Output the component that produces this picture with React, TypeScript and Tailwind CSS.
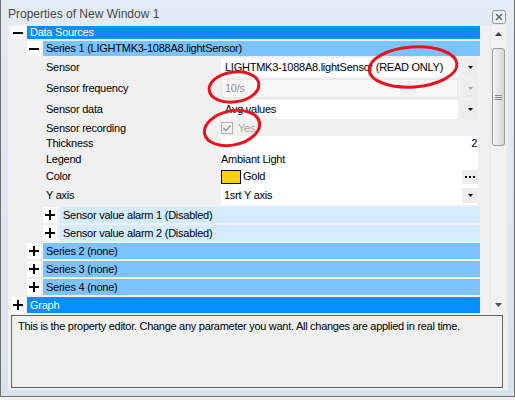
import React from "react";

const font = "font-['Liberation_Sans',Arial,sans-serif]";

function Sign({ plus }: { plus?: boolean }) {
  return (
    <div className="flex w-[14px] shrink-0 items-center justify-center bg-white">
      <svg width="10" height="10" viewBox="0 0 10 10">
        <rect x="0" y="4" width="10" height="2" fill="#000" />
        {plus && <rect x="4" y="0" width="2" height="10" fill="#000" />}
      </svg>
    </div>
  );
}

function Group({
  pad,
  open,
  label,
  band,
  className,
}: {
  pad: string;
  open?: boolean;
  label: string;
  band: string;
  className: string;
}) {
  return (
    <div className={`flex shrink-0 ${className}`}>
      <div className={`shrink-0 ${pad}`} />
      <Sign plus={!open} />
      <div className={`flex flex-1 items-center whitespace-nowrap pl-[3px] ${band}`}>{label}</div>
    </div>
  );
}

function Prop({ label, h, children }: { label: string; h: string; children?: React.ReactNode }) {
  return (
    <div className={`flex shrink-0 ${h}`}>
      <div className="w-[38px] shrink-0" />
      <div className="flex w-[175px] shrink-0 items-center whitespace-nowrap">{label}</div>
      <div className="mr-[2px] flex flex-1">{children}</div>
    </div>
  );
}

function Arrow({ color = "#000" }: { color?: string }) {
  return (
    <svg width="5" height="3" viewBox="0 0 5 3">
      <polygon points="0,0 5,0 2.5,3" fill={color} />
    </svg>
  );
}

function DropButton({ disabled }: { disabled?: boolean }) {
  return (
    <div className="ml-[4px] flex w-[16px] shrink-0 items-center justify-center bg-[#ededed]">
      <Arrow color={disabled ? "#a6a6a6" : "#000"} />
    </div>
  );
}

export default function App() {
  return (
    <div className={`relative h-[400px] w-[515px] overflow-hidden bg-[#f0f0f0] text-[11px] tracking-[-0.25px] text-black ${font}`}>
      <div className="flex h-[397px] flex-col border-x border-b border-[#707070] bg-gradient-to-b from-[#e3ebf5] to-[#d8e3f0]">
        {/* title bar */}
        <div className="flex h-[25px] shrink-0 items-start justify-between pl-[7px] pr-[8px]">
          <div className="pt-[7px] text-[12px] leading-[14px] tracking-normal text-[#474747]">
            Properties of New Window 1
          </div>
          <div className="mt-[10px]">
            <svg width="14" height="14" viewBox="0 0 14 14">
              <rect x="0.5" y="0.5" width="13" height="13" rx="2" fill="#edf1f7" stroke="#8c97a8" />
              <path d="M4 4 L10 10 M10 4 L4 10" stroke="#ffffff" strokeWidth="3.2" />
              <path d="M4 4 L10 10 M10 4 L4 10" stroke="#5e6878" strokeWidth="1.6" />
            </svg>
          </div>
        </div>

        {/* content panel */}
        <div className="mx-[7px] flex h-[365px] w-[500px] shrink-0 flex-col bg-[#f0f0f0]">
          <div className="flex h-[288px] shrink-0 overflow-hidden">
            {/* property rows */}
            <div className="flex w-[482px] flex-col overflow-hidden pr-[10px] leading-[13px]">
              <Group
                pad="w-[3px]"
                open
                label="Data Sources"
                band="ml-[2px] bg-[#0b8cff] text-white"
                className="mt-[1px] h-[13px]"
              />
              <Group
                pad="w-[19px]"
                open
                label="Series 1 (LIGHTMK3-1088A8.lightSensor)"
                band="ml-[2px] bg-[#7ac3ff]"
                className="mt-[2px] h-[15px]"
              />

              <div className="mt-[2px]">
                <Prop label="Sensor" h="h-[19px]">
                  <div className="flex flex-1 items-center whitespace-nowrap bg-white pl-[4px]">
                    LIGHTMK3-1088A8.lightSensor (READ ONLY)
                  </div>
                  <DropButton />
                </Prop>
              </div>
              <div className="mt-[2px]">
                <Prop label="Sensor frequency" h="h-[19px]">
                  <div className="flex flex-1 items-center border border-[#e6e6e6] bg-[#f8f8f8] pl-[3px] text-[#8f8f8f]">
                    10/s
                  </div>
                  <DropButton disabled />
                </Prop>
              </div>
              <div className="mt-[2px]">
                <Prop label="Sensor data" h="h-[19px]">
                  <div className="flex flex-1 items-center bg-white pl-[4px]">Avg values</div>
                  <DropButton />
                </Prop>
              </div>
              <div className="mt-[1px]">
                <Prop label="Sensor recording" h="h-[16px]">
                  <div className="flex flex-1 items-center gap-[5px] text-[#a9a9a9]">
                    <svg width="12" height="12" viewBox="0 0 12 12">
                      <rect x="0.5" y="0.5" width="11" height="11" fill="#f5f5f5" stroke="#b1b1b1" />
                      <path d="M2.5 6 L5 8.5 L9.5 3.5" fill="none" stroke="#9c9c9c" strokeWidth="1.6" />
                    </svg>
                    Yes
                  </div>
                </Prop>
              </div>
              <Prop label="Thickness" h="h-[15px]">
                <div className="flex flex-1 items-center justify-end bg-white pr-[1px]">2</div>
              </Prop>
              <Prop label="Legend" h="h-[16px]">
                <div className="flex flex-1 items-center bg-white">Ambiant Light</div>
              </Prop>
              <Prop label="Color" h="h-[19px]">
                <div className="flex flex-1 items-center bg-white">
                  <div className="h-[14px] w-[20px] shrink-0 border border-black bg-[#ffd200]" />
                  <span className="ml-[2px]">Gold</span>
                  <div className="ml-auto flex h-[14px] w-[16px] items-center justify-center bg-[#ededed]">
                    <svg width="10" height="2" viewBox="0 0 10 2">
                      <rect x="0" y="0" width="2" height="2" fill="#000" />
                      <rect x="4" y="0" width="2" height="2" fill="#000" />
                      <rect x="8" y="0" width="2" height="2" fill="#000" />
                    </svg>
                  </div>
                </div>
              </Prop>
              <Prop label="Y axis" h="h-[19px]">
                <div className="flex flex-1 bg-white py-[2px]">
                  <div className="flex flex-1 items-center pl-[3px]">1srt Y axis</div>
                  <DropButton />
                </div>
              </Prop>

              <Group
                pad="w-[35px]"
                label="Sensor value alarm 1 (Disabled)"
                band="ml-[3px] bg-[#d5ebff]"
                className="mt-[2px] h-[16px]"
              />
              <Group
                pad="w-[35px]"
                label="Sensor value alarm 2 (Disabled)"
                band="ml-[3px] bg-[#d5ebff]"
                className="mt-[2px] h-[16px]"
              />
              <Group pad="w-[19px]" label="Series 2 (none)" band="ml-[2px] bg-[#7ac3ff]" className="mt-[2px] h-[16px]" />
              <Group pad="w-[19px]" label="Series 3 (none)" band="ml-[2px] bg-[#7ac3ff]" className="mt-[2px] h-[16px]" />
              <Group pad="w-[19px]" label="Series 4 (none)" band="ml-[2px] bg-[#7ac3ff]" className="mt-[2px] h-[16px]" />
              <Group
                pad="w-[3px]"
                label="Graph"
                band="ml-[2px] bg-[#0b8cff] text-white"
                className="mt-[2px] h-[16px]"
              />
            </div>

            {/* scrollbar */}
            <div className="flex w-[17px] shrink-0 flex-col border-x border-[#e8e8e8] bg-[#f2f2f2]">
              <div className="flex h-[17px] shrink-0 items-center justify-center">
                <svg width="7" height="4" viewBox="0 0 7 4">
                  <polygon points="0,4 7,4 3.5,0" fill="#404040" />
                </svg>
              </div>
              <div className="mx-[1px] mt-[6px] flex h-[98px] shrink-0 flex-col items-center justify-center gap-[1px] rounded-[3px] border border-[#9b9b9b] bg-gradient-to-r from-[#f5f5f5] to-[#d6d6d6]">
                <div className="h-px w-[7px] bg-[#8a8a8a]" />
                <div className="h-px w-[7px] bg-[#8a8a8a]" />
                <div className="h-px w-[7px] bg-[#8a8a8a]" />
              </div>
              <div className="flex-1" />
              <div className="flex h-[17px] shrink-0 items-center justify-center">
                <svg width="7" height="4" viewBox="0 0 7 4">
                  <polygon points="0,0 7,0 3.5,4" fill="#505050" />
                </svg>
              </div>
            </div>
          </div>

          {/* description */}
          <div className="ml-[3px] mt-[2px] h-[73px] w-[492px] shrink-0 border border-[#646464] px-[6px] pt-[4px] leading-[13px] tracking-[-0.28px]">
            This is the property editor. Change any parameter you want. All changes are applied in real time.
          </div>
        </div>
      </div>

      {/* red annotation ellipses */}
      <svg className="pointer-events-none absolute left-0 top-0" width="515" height="400" viewBox="0 0 515 400">
        <ellipse cx="413" cy="67" rx="44" ry="20" transform="rotate(-4 413 67)" fill="none" stroke="#e6141e" strokeWidth="3" />
        <ellipse cx="234" cy="87" rx="25" ry="15" transform="rotate(-8 234 87)" fill="none" stroke="#e6141e" strokeWidth="3" />
        <ellipse cx="232" cy="128" rx="28" ry="17" transform="rotate(-12 232 128)" fill="none" stroke="#e6141e" strokeWidth="3" />
      </svg>
    </div>
  );
}
